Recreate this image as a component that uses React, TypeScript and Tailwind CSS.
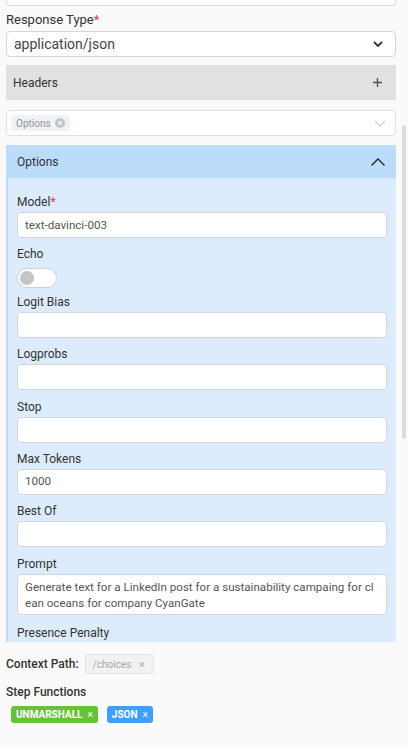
import React from "react";

const font = { fontFamily: "Roboto, 'Noto Sans', sans-serif" };

function Field({ label, value, required }: { label: string; value?: string; required?: boolean }) {
  return (
    <div className="flex flex-col mt-[9.4px]">
      <div className="text-[12px] leading-[14px] text-[#333] mb-[3px]">
        {label}
        {required && <span className="text-[#e53935]">*</span>}
      </div>
      <div className="h-[26px] bg-white border border-[#d3d7dd] rounded-[4px] px-[7px] flex items-center text-[11.6px] text-[#555]">
        {value}
      </div>
    </div>
  );
}

export default function App() {
  return (
    <div style={font} className="w-[408px] h-[745px] bg-[#fafafa] flex flex-col overflow-hidden">
      <div className="relative h-[642px] shrink-0 overflow-hidden">
        <div className="absolute right-[2px] top-[125px] w-[4px] h-[314px] rounded-full bg-[#dcdcdc]" />
        <div className="px-[6px] pr-[12px] flex flex-col">
          <div className="h-[6px] bg-white border border-t-0 border-[#dcdcdc] rounded-b-[4px]" />
          <div className="mt-[6px] text-[13px] leading-[16px] text-[#333]">
            Response Type<span className="text-[#e53935]">*</span>
          </div>
          <div className="mt-[3px] h-[26px] bg-white border border-[#d3d7dd] rounded-[4px] flex items-center justify-between pl-[7px] pr-[11px] text-[14px] text-[#444]">
            <span>application/json</span>
            <svg width="12" height="8" viewBox="0 0 12 8" fill="none" stroke="#333" strokeWidth="1.8">
              <path d="M2 2l4 4 4-4" />
            </svg>
          </div>
          <div className="mt-[8px] h-[35px] bg-[#e1e1e1] flex items-center justify-between pl-[7px] pr-[13px] text-[12px] text-[#333]">
            <span>Headers</span>
            <svg width="11" height="11" viewBox="0 0 11 11" stroke="#555" strokeWidth="1.4">
              <path d="M5.5 1v9M1 5.5h9" />
            </svg>
          </div>
          <div className="mt-[10px] h-[26px] bg-white border border-[#dcdfe6] rounded-[4px] flex items-center justify-between pl-[4px] pr-[9px]">
            <div className="h-[16px] px-[5px] rounded-[3px] bg-[#f0f2f5] flex items-center gap-[4px] text-[10px] text-[#909399]">
              <span>Options</span>
              <svg width="10" height="10" viewBox="0 0 10 10">
                <circle cx="5" cy="5" r="5" fill="#c0c4cc" />
                <path d="M3.2 3.2l3.6 3.6M6.8 3.2l-3.6 3.6" stroke="#fff" strokeWidth="1.1" />
              </svg>
            </div>
            <svg width="12" height="8" viewBox="0 0 12 8" fill="none" stroke="#c8ccd3" strokeWidth="1.2">
              <path d="M1 2l5 5 5-5" />
            </svg>
          </div>

          <div className="mt-[9px] flex flex-col">
            <div className="h-[33px] bg-[#bcdcfc] flex items-center justify-between pl-[11px] pr-[10px] text-[12px] text-[#333]">
              <span>Options</span>
              <svg width="16" height="10" viewBox="0 0 16 10" fill="none" stroke="#222" strokeWidth="1.3">
                <path d="M1.5 8.5L8 2l6.5 6.5" />
              </svg>
            </div>
            <div className="bg-[#ddecfd] border-l-[2px] border-[#c1dcfa] pl-[9px] pr-[9px] pt-[8px] pb-[20px] flex flex-col">
              <Field label="Model" required value="text-davinci-003" />
              <div className="flex flex-col mt-[9px]">
                <div className="text-[12px] leading-[14px] text-[#333] mb-[7px]">Echo</div>
                <div className="w-[40px] h-[20px] rounded-full bg-white border border-[#cfd3d8] flex items-center pl-[2px]">
                  <div className="w-[14px] h-[14px] rounded-full bg-[#c4c4c4]" />
                </div>
              </div>
              <div className="-mt-[3px] flex flex-col">
                <Field label="Logit Bias" />
              </div>
              <Field label="Logprobs" />
              <Field label="Stop" />
              <Field label="Max Tokens" value="1000" />
              <Field label="Best Of" />
              <div className="flex flex-col mt-[9.4px]">
                <div className="text-[12px] leading-[14px] text-[#333] mb-[3px]">Prompt</div>
                <div className="h-[41px] bg-white border border-[#d3d7dd] rounded-[4px] pl-[7px] pr-[8px] pt-[4px] text-[11.6px] leading-[16px] text-[#555] break-all">
                  Generate text for a LinkedIn post for a sustainability campaing for clean oceans for company CyanGate
                </div>
              </div>
              <div className="mt-[2px] flex flex-col">
                <Field label="Presence Penalty" />
              </div>
            </div>
          </div>
        </div>
      </div>
      <div className="px-[6px] flex flex-col">
        <div className="mt-[12px] flex items-center gap-[6px]">
          <span className="text-[12px] font-medium text-[#333]">Context Path:</span>
          <div className="h-[20px] pl-[7px] pr-[8px] bg-[#f2f2f2] border border-[#e4e4e4] rounded-[3px] flex items-center gap-[8px] text-[10px] text-[#a6a6a6]">
            <span>/choices</span>
            <span className="text-[10px]">×</span>
          </div>
        </div>
        <div className="mt-[11px] text-[12px] leading-[14px] font-medium text-[#333]">Step Functions</div>
        <div className="mt-[7px] pl-[5px] flex items-center gap-[9px]">
          <div className="h-[17px] px-[5px] rounded-[3px] bg-[#67c23a] text-white text-[10px] font-bold flex items-center gap-[5px]">
            <span>UNMARSHALL</span>
            <span className="font-normal text-[10px]">×</span>
          </div>
          <div className="h-[17px] px-[5px] rounded-[3px] bg-[#409eff] text-white text-[10px] font-bold flex items-center gap-[5px]">
            <span>JSON</span>
            <span className="font-normal text-[10px]">×</span>
          </div>
        </div>
      </div>
    </div>
  );
}
